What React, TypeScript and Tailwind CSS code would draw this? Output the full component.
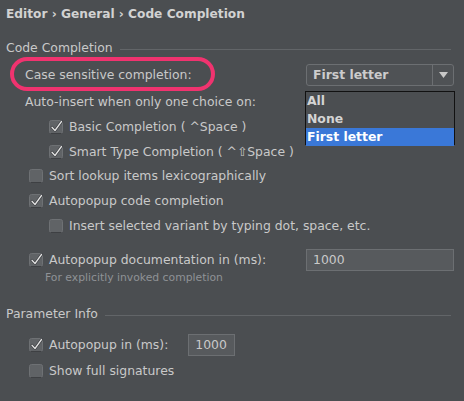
const font = { fontFamily: '"DejaVu Sans", "Liberation Sans", sans-serif' };

function Box({ checked }: { checked?: boolean }) {
  return (
    <svg width="14" height="14" viewBox="0 0 14 14" className="shrink-0">
      <rect x="0.5" y="0.5" width="13" height="13" rx="2" fill="#606366" stroke="#6e7174" />
      <line x1="1.5" y1="13.5" x2="12.5" y2="13.5" stroke="#3e4043" />
      {checked && (
        <>
          <path d="M3 7.2 L6 10.5 L12.5 1.5" fill="none" stroke="#35373a" strokeWidth="2.6" strokeLinecap="round" strokeLinejoin="round" />
          <path d="M3 7.2 L6 10.5 L12.5 1.5" fill="none" stroke="#e2e2e2" strokeWidth="1.3" strokeLinecap="round" strokeLinejoin="round" />
        </>
      )}
    </svg>
  );
}

function Check({ label, checked, indent, className = "" }: { label: string; checked?: boolean; indent: string; className?: string }) {
  return (
    <div className={`flex items-center h-[24px] gap-[6px] ${indent} ${className}`}>
      <Box checked={checked} />
      <span>{label}</span>
    </div>
  );
}

function Section({ title, className = "" }: { title: string; className?: string }) {
  return (
    <div className={`flex items-center h-[24px] pl-[6px] pr-[13px] gap-[7px] ${className}`}>
      <span>{title}</span>
      <div className="flex-1 h-px bg-[#626568] mt-[3px]" />
    </div>
  );
}

export default function App() {
  return (
    <div className="w-[464px] h-[401px] bg-[#4b4e51] text-[#c9c9c9] text-[12.4px] overflow-hidden" style={font}>
      <div className="h-[28px] flex items-center pl-[6px] text-[12.2px] font-bold text-[#d2d2d2]">
        Editor › General › Code Completion
      </div>
      <Section title="Code Completion" className="mt-[8px]" />

      <div className="relative flex items-center h-[26px] mt-[2px] pl-[25px]">
        <span>Case sensitive completion:</span>
        <div className="absolute left-[10px] top-[-5px] w-[205px] h-[34px] rounded-full border-[4.5px] border-[#f0336f]" />
        <div className="ml-auto mr-[10px] w-[148px] h-[22px] flex items-center border border-[#6c6f72] rounded-[3px] bg-[#4f5255]">
          <span className="flex-1 pl-[6px] font-bold text-[#cccccc]">First letter</span>
          <div className="w-[21px] h-full border-l border-[#6c6f72] flex items-center justify-center">
            <svg width="9" height="6" viewBox="0 0 9 6">
              <path d="M0 0 H9 L4.5 6 Z" fill="#c8c8c8" />
            </svg>
          </div>
        </div>
        <div className="absolute left-[305px] top-[29px] w-[150px] h-[54px] border border-[#111] bg-[#4b4e51] flex flex-col font-bold text-[#d4d4d4] z-10">
          <div className="h-[18px] flex items-center pl-[1px]">All</div>
          <div className="h-[18px] flex items-center pl-[1px]">None</div>
          <div className="h-[18px] flex items-center pl-[1px] bg-[#3a78d8] text-white">First letter</div>
        </div>
      </div>

      <div className="flex items-center h-[24px] mt-[2px] pl-[25px]">Auto-insert when only one choice on:</div>
      <Check label="Basic Completion ( ^Space )" checked indent="pl-[49px]" className="mt-[1px]" />
      <Check label="Smart Type Completion ( ^⇧Space )" checked indent="pl-[49px]" className="mt-[1px]" />
      <Check label="Sort lookup items lexicographically" indent="pl-[29px]" />
      <Check label="Autopopup code completion" checked indent="pl-[29px]" className="mt-[1px]" />
      <Check label="Insert selected variant by typing dot, space, etc." indent="pl-[49px]" className="mt-[1px]" />

      <div className="flex items-center h-[22px] mt-[11px] pl-[29px] pr-[10px]">
        <Box checked />
        <span className="ml-[6px]">Autopopup documentation in (ms):</span>
        <div className="ml-auto w-[148px] h-[22px] flex items-center pl-[6px] bg-[#575a5d] border border-[#6c6f72]">1000</div>
      </div>
      <div className="h-[14px] flex items-center pl-[45px] text-[10.8px] text-[#8f9296]">For explicitly invoked completion</div>

      <Section title="Parameter Info" className="mt-[17px]" />
      <div className="flex items-center h-[22px] mt-[8px] pl-[29px]">
        <Box checked />
        <span className="ml-[6px]">Autopopup in (ms):</span>
        <div className="ml-[20px] w-[47px] h-[22px] flex items-center pl-[6px] bg-[#575a5d] border border-[#6c6f72]">1000</div>
      </div>
      <Check label="Show full signatures" indent="pl-[29px]" className="mt-[3px]" />
    </div>
  );
}
